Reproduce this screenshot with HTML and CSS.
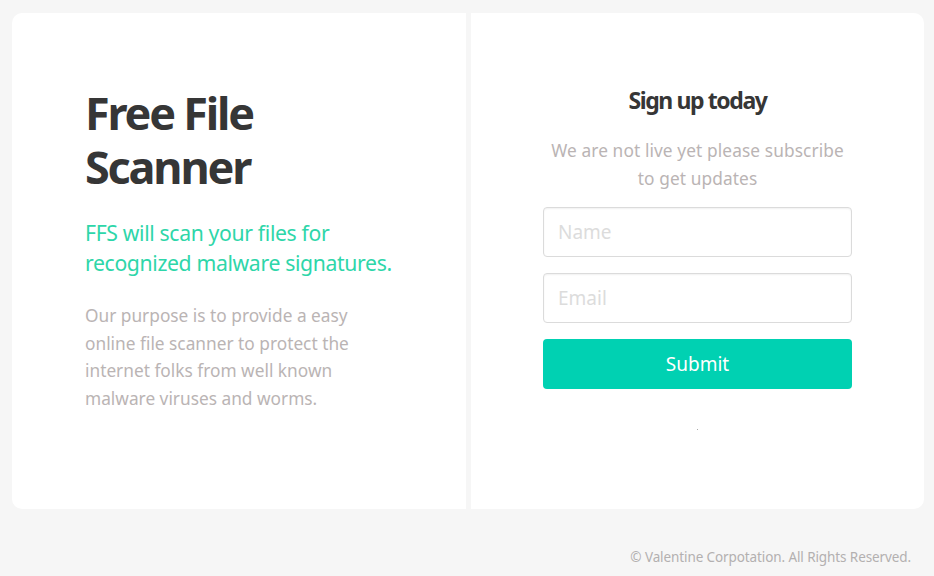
FILE: index.html
```html
<!DOCTYPE html>
<html lang="en">
<head>
<meta charset="utf-8">
<title>Free File Scanner</title>
<link rel="stylesheet" href="styles.css">
</head>
<body>
<main class="panels">
  <section class="panel panel-info">
    <h1 class="title"><span class="title-line">Free File</span><span class="title-line">Scanner</span></h1>
    <h2 class="subtitle">FFS will scan your files for<br>recognized malware signatures.</h2>
    <p class="about">Our purpose is to provide a easy<br>online file scanner to protect the<br>internet folks from well known<br>malware viruses and worms.</p>
  </section>
  <section class="panel panel-form">
    <h3 class="form-title">Sign up today</h3>
    <p class="form-note">We are not live yet please subscribe<br>to get updates</p>
    <form class="signup">
      <input class="field" type="text" placeholder="Name">
      <input class="field" type="email" placeholder="Email">
      <button class="submit" type="button">Submit</button>
    </form>
    <span class="dot"></span>
  </section>
</main>
<footer class="footer">© Valentine Corpotation. All Rights Reserved.</footer>
</body>
</html>
```

FILE: styles.css
```css
* { box-sizing: border-box; }
html, body { margin: 0; padding: 0; }
body {
  background: #f6f6f6;
  font-family: "Noto Sans", "Open Sans", sans-serif;
  height: 576px;
  overflow: hidden;
}
.panels {
  display: grid;
  grid-template-columns: 454px 453px;
  column-gap: 5px;
  margin: 13px 10px 0 12px;
  height: 496px;
}
.panel { background: #fff; }
.panel-info {
  border-radius: 10px 0 0 10px;
  padding: 73px 0 0 73px;
}
.panel-form {
  border-radius: 0 10px 10px 0;
  display: flex;
  flex-direction: column;
  align-items: center;
  padding-top: 71px;
}
.title {
  margin: 0;
  font-size: 45px;
  line-height: 54px;
  font-weight: 700;
  letter-spacing: -2.2px;
  color: #363636;
}
.title-line {
  display: block;
  height: 54px;
}
.subtitle {
  margin: 24px 0 0;
  font-size: 21.2px;
  line-height: 30px;
  font-weight: 400;
  letter-spacing: -0.35px;
  color: #2ed6a9;
}
.about {
  margin: 24px 0 0;
  font-size: 17.3px;
  line-height: 27.7px;
  color: #bab4b4;
  letter-spacing: 0;
}
.form-title {
  margin: 0;
  font-size: 23px;
  line-height: 32px;
  font-weight: 700;
  letter-spacing: -1.4px;
  color: #363636;
}
.form-note {
  margin: 21px 0 0;
  text-align: center;
  font-size: 17.3px;
  line-height: 28px;
  color: #bab4b4;
  letter-spacing: 0.1px;
}
.signup {
  margin-top: 14px;
  width: 309px;
  display: flex;
  flex-direction: column;
  gap: 16px;
}
.field {
  height: 50px;
  width: 100%;
  border: 1px solid #dbdbdb;
  border-radius: 4px;
  padding: 0 14px;
  font-family: inherit;
  font-size: 19px;
  color: #363636;
  box-shadow: inset 0 1px 2px rgba(10,10,10,0.06);
  outline: none;
}
.field::placeholder { color: #dcdcdc; }
.submit {
  height: 50px;
  width: 100%;
  border: 0;
  border-radius: 4px;
  background: #00d1b2;
  color: #fff;
  font-family: inherit;
  font-size: 19px;
  cursor: pointer;
}
.dot {
  margin-top: 40px;
  width: 1px;
  height: 1px;
  background: #aaa;
}
.footer {
  text-align: right;
  padding: 39px 23px 0 0;
  font-size: 13.5px;
  color: #b3b0b0;
  letter-spacing: -0.1px;
}
```
